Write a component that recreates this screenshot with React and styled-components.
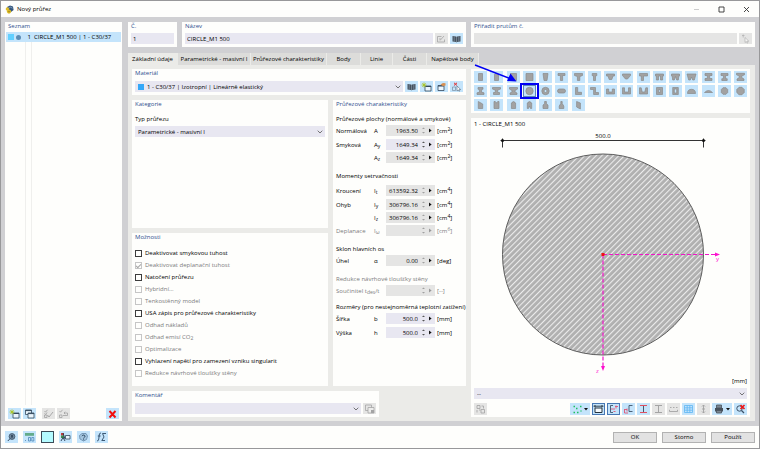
import React from "react";
import styled, { createGlobalStyle } from "styled-components";

const c = {
  white: "#fefefc",
  frame: "#d0d0d3",
  body: "#ebebe8",
  tab: "#dcdcda",
  field: "#e8e7f1",
  off: "#e5e5e4",
  blue: "#c4e4fb",
  head: "#2f4f8f",
  text: "#000000",
  dim: "#7c7c7c",
  shape: "#a2a2a2",
  edge: "#8a8a8a",
};

const GlobalStyle = createGlobalStyle`
  * { box-sizing: border-box; }
  body { margin: 0; background: ${c.white}; }
  body, button, input, select {
    font-family: "Open Sans", "Noto Sans", sans-serif;
    font-size: 6px;
    font-weight: 500;
    line-height: 10px;
    color: ${c.text};
  }
  button, input, select { margin: 0; padding: 0; border: 0; border-radius: 0; outline: 0; }
  svg { display: block; }
  sub, sup { font-size: 5px; line-height: 1px; }
  sub { vertical-align: -1px; }
  sup { vertical-align: 2px; }
`;

const Window = styled.div`
  min-height: 100vh;
  display: flex;
  flex-direction: column;
  border: 1px solid #98989a;
  background: ${c.white};
  white-space: nowrap;
`;

const TitleBar = styled.header`
  height: 16px;
  display: flex;
  align-items: center;
  gap: 3px;
  padding: 0 8px 0 4px;
`;

const WindowTitle = styled.h1`
  margin: 0;
  flex: 1;
  font-size: 6px;
  font-weight: 500;
`;

const WindowButton = styled.button`
  width: 9px;
  height: 9px;
  margin-left: 13px;
  background: none;
`;

const Main = styled.main`
  flex: 1;
  display: flex;
  gap: 6px;
  padding: 5px 4px;
  background: ${c.frame};
`;

const Panel = styled.section`
  background: ${c.white};
  padding: 0 3px 3px;
  min-width: 0;
`;

const PanelTitle = styled.h2`
  display: block;
  margin: 0;
  font-size: 6px;
  line-height: 9px;
  font-weight: 500;
  color: ${c.head};
`;

const Sidebar = styled(Panel)`
  flex: 0 0 117px;
  display: flex;
  flex-direction: column;
  padding: 0 1px 2px;

  & > ${PanelTitle} { padding-left: 2px; }
`;

const List = styled.ul`
  flex: 1;
  margin: 1px 0 3px;
  padding: 0;
  list-style: none;
  background: linear-gradient(to right, transparent 19px, #efefed 19px 20px, transparent 20px 25px, #efefed 25px 26px, transparent 26px);
`;

const ListItem = styled.li`
  height: 10px;
  display: flex;
  align-items: center;
  gap: 2px;
  padding-left: 2px;
  background: ${c.blue};
`;

const ItemNumber = styled.span`
  width: 9px;
  padding-right: 1px;
  text-align: right;
`;

const Swatch = styled.span`
  width: 6px;
  height: 6px;
  flex: none;
  background: ${(p) => p.$color};
`;

const Dot = styled(Swatch)`
  width: 5px;
  height: 5px;
  border-radius: 50%;
`;

const Tools = styled.div`
  display: flex;
  align-items: center;
  gap: 2px;
  padding: 0 2px;
`;

const Spacer = styled.span`
  flex: ${(p) => (p.$w ? `0 0 ${p.$w}px` : 1)};
`;

const ToolButton = styled.button`
  width: ${(p) => (p.$wide ? 20 : 13)}px;
  height: ${(p) => (p.$tall ? 12 : 11)}px;
  flex: none;
  display: flex;
  align-items: center;
  justify-content: center;
  gap: 2px;
  background: ${(p) => p.$fill || (p.disabled ? c.off : c.blue)};
  border: ${(p) => (p.$on ? `1px solid ${p.$fill ? "#3c4c58" : "#4778b4"}` : "0")};

  & > svg { flex: none; }
`;

const Content = styled.div`
  flex: 1;
  min-width: 0;
  display: flex;
  flex-direction: column;
`;

const HeaderRow = styled.div`
  display: grid;
  grid-template-columns: 49px 1fr 1fr;
  gap: 5px;
  margin-bottom: 6px;
`;

const FieldRow = styled.div`
  display: flex;
  gap: 2px;
  margin-top: 2px;
`;

const TextInput = styled.input`
  flex: 1;
  min-width: 0;
  height: 11px;
  padding-left: 2px;
  background: ${(p) => (p.disabled ? c.off : c.field)};
`;

const TabBar = styled.div`
  display: flex;
`;

const Tab = styled.button`
  height: 12px;
  width: ${(p) => p.$w}px;
  text-align: center;
  background: ${(p) => (p["aria-selected"] ? c.body : c.tab)};
  border-right: 1px solid ${c.body};
`;

const TabBody = styled.div`
  flex: 1;
  display: grid;
  grid-template-columns: 334fr 279fr;
  gap: 5px;
  padding: 4px 5px 4px 4px;
  background: ${c.body};
`;

const Column = styled.div`
  display: flex;
  flex-direction: column;
  gap: 5px;
  min-width: 0;
`;

const Split = styled.div`
  flex: 1;
  display: grid;
  grid-template-columns: 196fr 133fr;
  gap: 5px;
`;

const GrowPanel = styled(Panel)`
  flex: 1;
`;

const FieldPanel = styled(Panel)`
  height: 26px;
  width: ${(p) => (p.$partial ? "74%" : "auto")};

  & > ${FieldRow} { margin-top: 3px; }
`;

const SelectBox = styled.span`
  flex: 1;
  min-width: 0;
  height: 11px;
  display: flex;
  align-items: center;
  gap: 3px;
  padding: 0 2px 0 3px;
  background: ${c.field};
`;

const NativeSelect = styled.select`
  flex: 1;
  min-width: 0;
  height: 11px;
  appearance: none;
  background: transparent;
`;

const Label = styled.label`
  display: block;
  margin: 5px 0 1px;
`;

const Options = styled.div`
  margin: 5px 0 4px;
`;

const Option = styled.label`
  height: 12px;
  display: flex;
  align-items: center;
  gap: 3px;
  color: ${(p) => (p.$off ? c.dim : c.text)};
`;

const Check = styled.input`
  appearance: none;
  width: 7px;
  height: 7px;
  flex: none;
  display: grid;
  place-items: center;
  border: 1px solid #3c3c3c;

  &:disabled { border-color: #c6c6c6; }
  &:checked::after {
    content: "";
    width: 4px;
    height: 2px;
    border: solid #a6a6a6;
    border-width: 0 0 1px 1px;
    transform: rotate(-45deg);
  }
`;

const Group = styled.div`
  margin-top: ${(p) => p.$gap}px;
  color: ${(p) => (p.$off ? c.dim : c.text)};
`;

const GroupTitle = styled.h3`
  margin: 0 0 ${(p) => p.$gap || 1}px;
  font-size: 6px;
  line-height: 10px;
  font-weight: 500;
`;

const ValueRow = styled.div`
  display: grid;
  grid-template-columns: ${(p) => (p.$long ? "50px" : "38px 12px")} 49px 1fr;
  align-items: center;
  height: 11px;
  margin-bottom: ${(p) => p.$gap ?? 2}px;
  color: ${(p) => (p.$off ? c.dim : c.text)};
`;

const NumberField = styled.span`
  height: 11px;
  display: flex;
  align-items: center;
  background: ${(p) => (p.$off ? c.off : c.field)};
`;

const NumberInput = styled.input`
  width: 33px;
  height: 11px;
  padding-right: 1px;
  text-align: right;
  background: transparent;
`;

const StepButton = styled.button`
  width: 6px;
  height: 11px;
  margin-left: 1px;
  background: none;
  display: grid;
  place-items: center;
`;

const Unit = styled.span`
  padding-left: 2px;
`;

const ShapePanel = styled(Panel)`
  height: 44px;
  padding: 2px 3px;
`;

const ShapeGrid = styled.div`
  display: grid;
  grid-template-columns: repeat(17, 13px);
  justify-content: space-between;
  row-gap: 2px;
`;

const ShapeButton = styled.button`
  position: relative;
  width: 13px;
  height: 12px;
  background: ${c.blue};
  border: ${(p) => (p.$on ? "1px solid #5b87b8" : "0")};
  display: grid;
  place-items: center;
`;

const Highlight = styled.span`
  position: absolute;
  inset: -3px -4px;
  border: 2px solid #0000f4;
  z-index: 1;
`;

const Pointer = styled.svg`
  position: absolute;
  right: 17px;
  bottom: 12px;
  z-index: 2;
`;

const Preview = styled(Panel)`
  flex: 1;
  display: flex;
  flex-direction: column;
  padding-bottom: 2px;

  & > ${FieldRow} { flex: none; margin: 2px 0 4px; }
  & > ${Tools} { padding: 0; }
`;

const PreviewTitle = styled.h2`
  margin: 0;
  font-size: 6px;
  line-height: 12px;
  font-weight: 500;
`;

const Drawing = styled.svg`
  flex: 1;
  width: 100%;
  min-height: 246px;
`;

const PreviewUnit = styled.div`
  text-align: right;
`;

const Footer = styled.footer`
  height: 22px;
  display: flex;
  align-items: center;
  gap: 5px;
  padding: 0 4px;
`;

const DialogButton = styled.button`
  width: 44px;
  height: 11px;
  background: #e2e2e2;
  border: 1px solid #b2b2b2;
  line-height: 9px;
`;

/* ---------- icons ---------- */

const Svg = ({ w = 11, h = 10, children }) => (
  <svg width={w} height={h} viewBox={`0 0 ${w} ${h}`} fill="none" aria-hidden="true">
    {children}
  </svg>
);

const Chevron = () => (
  <Svg w={6} h={4}>
    <path d="M.7 .7 3 3 5.300 .7" stroke="#555" strokeWidth=".8" />
  </Svg>
);
const Caret = () => (
  <Svg w={4} h={3}>
    <path d="M0 0h4L2 2.500z" fill="#111" />
  </Svg>
);
const AppIcon = () => (
  <Svg w={9} h={9}>
    <path d="M2 2 5 .4 8 1.600 8.600 5 6 7 3 5z" fill="#34557c" />
    <path d="M3 3.500 5.500 2.200 7.500 3.200" stroke="#8fb0cf" strokeWidth=".8" />
    <circle cx="2.400" cy="4" r="1.700" fill="#e0bd28" />
    <circle cx="4" cy="6.600" r="2.100" fill="#d9b821" />
    <circle cx="4" cy="6.600" r=".7" fill="#8a751d" />
  </Svg>
);
const Edit = () => (
  <Svg>
    <path d="M1.500 2.500h4M1.500 2.500v5.500h7V5.500M4 6.500l4-4.500M3 5h2" stroke="#a4a4a4" strokeWidth=".8" />
  </Svg>
);
const Books = () => (
  <Svg>
    <path d="M1.500 2 5 2.500 5.500 3 6 2.500 9.500 2v5.500L6 8l-.5.400L5 8l-3.500-.5z" fill="#47525e" />
    <path d="M5.500 3v5M3.200 2.500v5M7.800 2.500v5" stroke="#9fb6ca" strokeWidth=".5" />
  </Svg>
);
const Pick = () => (
  <Svg>
    <path d="M2 1.500h2.500M3.200.5v3" stroke="#b4b4b4" strokeWidth=".8" />
    <path d="M5 3.500v5l1.300-1 .8 1.700.8-.4-.8-1.600h1.700z" fill="#f6f6f6" stroke="#aaa" strokeWidth=".6" />
  </Svg>
);
const NewWin = () => (
  <Svg>
    <path d="M4 4h6v5H4z" fill="#eaf5fd" stroke="#33495e" strokeWidth=".8" />
    <path d="M4 4.500h6" stroke="#33495e" />
    <path d="M3 .5v5M.5 3h5M1.300 1.300l3.400 3.400M4.700 1.300 1.300 4.700" stroke="#a9c51b" strokeWidth=".8" />
  </Svg>
);
const CopyWin = () => (
  <Svg>
    <path d="M1.500 1h6v4.500h-6z" fill="#eaf5fd" stroke="#33495e" strokeWidth=".8" />
    <path d="M4 4h6v5H4z" fill="#eaf5fd" stroke="#33495e" strokeWidth=".8" />
    <path d="M1.500 1.600h6M4 4.600h6" stroke="#33495e" />
  </Svg>
);
const CopyComment = () => (
  <Svg>
    <path d="M1.500 1h6v5.500h-6z" stroke="#a4a4a4" strokeWidth=".8" />
    <path d="M4 3.500h6V9H4z" fill="#ededec" stroke="#a4a4a4" strokeWidth=".8" />
    <path d="M7 6h3v3H7z" fill="#a4a4a4" />
  </Svg>
);
const EditWin = () => (
  <Svg>
    <path d="M2 3.500h6v5H2z" fill="#eaf5fd" stroke="#33495e" strokeWidth=".8" />
    <path d="M2 4h6" stroke="#33495e" />
    <path d="M4.500 2.500 7 1 9.500 1.200V3.500L7 4.200z" fill="#d58f52" />
  </Svg>
);
const Unpick = () => (
  <Svg>
    <path d="M3 .8 6 3.500M6 .8 3 3.500" stroke="#e12a2a" />
    <path d="M1.500 5h3v3.500h-3z" stroke="#7a8ea2" strokeWidth=".7" />
    <path d="M6 4v5l1.200-1 .8 1.300.8-.4-.7-1.400h1.600z" fill="#fff" stroke="#566a7e" strokeWidth=".6" />
  </Svg>
);
const CheckList = ({ second }) => (
  <Svg>
    <path d="M1.500 2 2.500 3.200 4.500.8M1.500 6h2.500v2.500H1.500z" stroke="#a2a2a2" strokeWidth=".8" />
    {second ? (
      <path d="M5 6.500h4.500V4H6M7.200 2.700 6 4l1.200 1.200" stroke="#a2a2a2" strokeWidth=".8" />
    ) : (
      <path d="m4.500 6 1.500 2 4-5M1.500 4.500 2.500 5.500 4 3.500" stroke="#a2a2a2" strokeWidth=".9" />
    )}
  </Svg>
);
const RedX = () => (
  <Svg>
    <path d="m2.500 2 6 6.500m0-6.500-6 6.500" stroke="#f10d0d" strokeWidth="1.900" />
  </Svg>
);
const Magnify = () => (
  <Svg>
    <circle cx="6" cy="4.500" r="2.900" fill="#6f879e" stroke="#4a6278" />
    <path d="M4 6.700 1.800 9M5 4h2M6 3v3" stroke="#22384d" strokeWidth=".9" />
  </Svg>
);
const Decimals = () => (
  <Svg>
    <path d="M1 1h9v2.800H1z" fill="#63ab8b" />
    <path d="M1.500 8v1M4.500 5.500h2V9h-2zM7.800 5.500h2V9h-2z" stroke="#4e86b8" strokeWidth=".8" />
  </Svg>
);
const Palette = () => (
  <Svg>
    <path d="M1 1h3v2.500H1z" fill="#c23b3b" />
    <path d="M1 3.500h3V6H1z" fill="#3d8f4f" />
    <path d="M1 9 3 5.500 5 9M3 1l2 6" stroke="#243a52" strokeWidth=".9" />
    <path d="M5.500 3.500H10V7H5.500z" fill="#eaf5fd" stroke="#33495e" strokeWidth=".8" />
  </Svg>
);
const HelpGlobe = () => (
  <Svg>
    <path d="M2 7 1.500 3.500 4 1.500 8 1.500 9.500 4 8.500 7.500 5.500 9z" fill="#a5c6e0" stroke="#6488a8" strokeWidth=".8" />
    <path d="M4 4.200C4.200 2.700 7 2.700 7 4.300 7 5.400 5.600 5.200 5.600 6.500M5.600 7.400v.8" stroke="#28445e" />
  </Svg>
);
const Formula = () => (
  <Svg>
    <path d="M5 1.200C3.500.6 3.300 2 3 5s-.6 4.300-2 3.800M1.800 4h2.800M10 1.500H6.500L8 5 5.800 8.500H9" stroke="#2c4966" strokeWidth=".9" />
  </Svg>
);
const Steps = ({ off }) => (
  <Svg w={3} h={7}>
    <path d="M0 2 1.500 .5 3 2zM0 5 1.500 6.500 3 5z" fill={off ? "#a0a0a0" : "#555"} />
  </Svg>
);
const Arrow = ({ off }) => (
  <Svg w={3} h={5}>
    <path d="M0 .5v4L2.600 2.500z" fill={off ? "#999" : "#111"} />
  </Svg>
);
const Swap = () => (
  <Svg>
    <path d="M2 1.500h3v3H2zM2 6v2.500M4 6h1.500M6.500 2h2v2.500M6 5.500h3.500V9H6z" stroke="#a2a2a2" strokeWidth=".8" />
  </Svg>
);
const Points = () => (
  <Svg w={9} h={9}>
    <path d="M.5 1.500h1.500M7 1.500h1.500M3 3.500h1.500M.5 7.500h1.500M4 7.500h1.500M7.500 6h1" stroke="#1ec060" strokeWidth="1.300" />
  </Svg>
);
const Dimension = () => (
  <Svg>
    <path d="M2 4h7v4.500H2z" fill="#f4fafe" stroke="#27323c" />
    <path d="M.5 2.200h10M2 1v2.500M9 1v2.500" stroke="#27323c" strokeWidth=".9" />
  </Svg>
);
const Axes = () => (
  <Svg>
    <path d="M5 1.500H2.500v7H5" stroke="#40536a" strokeWidth=".9" />
    <path d="M3 5h4M8 1.500v3M7 2.500h3M5.500 7.500h2" stroke="#e05575" strokeWidth=".9" />
  </Svg>
);
const AxesLow = () => (
  <Svg>
    <path d="M9.500 1.500H6v6h3.500" stroke="#40536a" strokeWidth=".9" />
    <path d="M1.500 5v4M1.500 9H5M4 4.500v3M1.500 5.500H4" stroke="#e05575" strokeWidth=".9" />
  </Svg>
);
const BeamIcon = ({ a, b }) => (
  <Svg>
    <path d="M2 1.500h7M2 8.500h7" stroke={b} />
    <path d="M5.500 2v6" stroke={a} />
  </Svg>
);
const RulerIcon = () => (
  <Svg>
    <path d="M1.500 7.500h8M1.500 5.800v1.700M9.500 5.800v1.700M2 3.500h1.500M5 3.500h1.500M8 3.500h1.500" stroke="#a4a4a4" strokeWidth=".9" />
  </Svg>
);
const GridIcon = () => (
  <Svg>
    <path d="M1.500 1.500h8v7h-8zM1.500 3.800h8M1.500 6.200h8M4.200 1.500v7M6.800 1.500v7" stroke="#5eb6f4" strokeWidth=".8" />
  </Svg>
);
const Tall = () => (
  <Svg>
    <path d="M5.500 1v8M4 2.500 5.500 1 7 2.500M4 7.500 5.500 9 7 7.500M4 5h3" stroke="#a2a2a2" strokeWidth=".9" />
  </Svg>
);
const Print = () => (
  <Svg w={10}>
    <path d="M1 4h8v3.500H1z" fill="#48525c" />
    <path d="M2.500 1h5v3h-5zM2.500 6.500h5V9h-5z" fill="#7c8893" stroke="#48525c" strokeWidth=".8" />
  </Svg>
);
const ZoomOff = () => (
  <Svg>
    <circle cx="4.500" cy="4.500" r="2.700" stroke="#3c5268" />
    <path d="m6.500 6.500 2.500 2.500" stroke="#3c5268" strokeWidth="1.300" />
    <path d="m5.500 1 4 4m0-4-4 4" stroke="#f01414" strokeWidth="1.600" />
  </Svg>
);

/* Section outlines on an 11 x 10 grid. */
const SHAPES = [
  ["Obdélník", "M3.500 1.500h4v7h-4z"],
  ["Obdélník zaoblený", "M4.300 1.500h2.400l.8.800v6.200h-4V2.300z"],
  ["Obdélník šikmý", "M2.500 1.500h6v7h-6z"],
  ["Čtverec", "M2 1.500h7v7H2z"],
  ["Lichoběžník", "M3 1.500h5L7 8.500H4z"],
  ["T průřez", "M2 1.500h7v2H6.600v5H4.400v-5H2z"],
  ["T průřez s náběhem", "M1.500 1.500h8v2L6.800 4.500v4H4.400v-4L1.500 3.500z"],
  ["T průřez úzký", "M3.200 1.500h4.600v2.200H6.500v4.800h-2V3.700H3.200z"],
  ["T průřez klín", "M1.500 2h8v2H8L6.800 7.500H4.200L3 4H1.500z"],
  ["T průřez klín zkosený", "M1.500 2h8v1.500L6.500 7h-2l-3-3.500z"],
  ["Jednostranné T", "M1.500 1.500h8v2.500H5.500v4.500H3.300V4H1.500z"],
  ["Dvojité T", "M1.500 2h8v2H8.600v4H6.500V4h-2v4H2.400V4h-.9z"],
  ["Dvojité T zkosené", "M1.500 2h8v2h-.7L8.300 8h-1.600L5.500 4.500 4.300 8H2.700L2.200 4h-.7z"],
  ["Dvojité T klín", "M1 2h9L8.300 8h-1.600L5.500 5 4.300 8H2.700z"],
  ["I průřez", "M2 1.500h7v2H6.700v3H9v2H2v-2h2.300v-3H2z"],
  ["I průřez nesymetrický", "M2 1.500h7v2H6.600v3.200h1.600v1.800H2.800V6.700h1.600V3.500H2z"],
  ["I průřez s náběhem", "M1.500 1.300h8v1.500L6.700 4v1.500l2.300 1.500v1.500H2V7l2.300-1.500V4L1.500 2.800z"],
  ["I průřez široký", "M3 1.500h5v1.800H6.600v3L9 6.800v1.700H2V6.800l2.400-.5v-3H3z"],
  ["I průřez horní", "M1.500 1.500h8v1.600L6.700 4v2.500H8.500v2h-6v-2h1.800V4L1.500 3.100z"],
  ["I průřez zkosený", "M1.500 1.500h8v1.600L7 4.500v1.500l2 1v1.500H2V7l2-1V4.500L1.500 3.100z"],
  ["Kruh", "M5.500 1.300a3.700 3.700 0 1 1 0 7.400a3.700 3.700 0 1 1 0-7.400z"],
  ["Trubka", "M5.500 1.300a3.700 3.700 0 1 1 0 7.400a3.700 3.700 0 1 1 0-7.400zM5.500 3.500a1.500 1.500 0 1 0 0 3a1.500 1.500 0 1 0 0-3z"],
  ["Ovál", "M3.500 3h4a2 2 0 0 1 0 4h-4a2 2 0 0 1 0-4z"],
  ["L průřez", "M2.500 1.500h2.200v4.800H8.500v2.200h-6z"],
  ["Z průřez", "M1.500 1.500h5v5H9.500v2H4.600v-5H1.500z"],
  ["U průřez", "M1.500 3h2.200v3h3.600V3h2.200v5h-8z"],
  ["U průřez vysoký", "M1.500 1.800h2v4.200h4V1.800h2V8h-8z"],
  ["U průřez zkosený", "M1.500 1.800h1.700L4.200 6h2.600l1-4.200h1.700V8h-8z"],
  ["Komora", "M2.500 1.500h6v7h-6zM4.700 3.500v3h1.600v-3z"],
  ["Komora tenká", "M2.700 1.500h5.600v7H2.700zM4.300 3v4h2.400V3z"],
  ["Půlkruh", "M1.500 7.500a4 4.200 0 0 1 8 0z"],
  ["Úseč", "M1.500 6.500q4-4 8 0z"],
  ["Osmiúhelník", "M4 1.700h3L8.700 3.500v3L7 8.300H4L2.300 6.500v-3z"],
  ["Mnohoúhelník", "M4 1.300h3L9.200 3.500v3L7 8.700H4L1.800 6.500v-3z"],
  ["Zkosený obdélník", "M3.300 1.500 7.700 4v4.500H3.300z"],
  ["Obdélník s výřezem", "M3 1.500h1.300l.5 1.200h1.400l.5-1.200H8v7H3z"],
  ["Oblouk", "M3.400 8.500V3q2.100-2.800 4.200 0v5.500z"],
  ["Oblouk s výřezem", "M3.300 8.500V3q2.200-2.800 4.400 0v5.500H6.500L5.500 6l-1 2.500z"],
  ["Láhev", "M4.600 1.500h1.800v2.200L8 5v3.500H3V5l1.600-1.300z"],
  ["Láhev úzká", "M4.800 1.500h1.400v2L7.800 6v2.500H3.200V6l1.600-2.500z"],
  ["Rovnoběžník", "M3.600 1.500 7.400 3v6L5 7.800 3.600 7z"],
];

/* ---------- building blocks ---------- */

const Select = ({ label, swatch, children }) => (
  <SelectBox>
    {swatch && <Swatch $color={swatch} />}
    <NativeSelect aria-label={label}>
      <option>{children}</option>
    </NativeSelect>
    <Chevron />
  </SelectBox>
);

const Tool = ({ label, children, ...rest }) => (
  <ToolButton type="button" aria-label={label} {...rest}>
    {children}
  </ToolButton>
);

const Value = ({ id, label, symbol, value, unit, off, editable, long, gap }) => (
  <ValueRow $off={off} $long={long} $gap={gap}>
    <label htmlFor={id}>{label}</label>
    {!long && <span>{symbol}</span>}
    <NumberField $off={!editable}>
      <NumberInput id={id} aria-label={id} defaultValue={value} disabled={off} readOnly={!editable} />
      <StepButton type="button" aria-label="Krok">
        <Steps off={!editable} />
      </StepButton>
      <StepButton type="button" aria-label="Další">
        <Arrow off={off} />
      </StepButton>
    </NumberField>
    <Unit>{unit}</Unit>
  </ValueRow>
);

const TABS = [
  ["Základní údaje", 50],
  ["Parametrické - masivní I", 73],
  ["Průřezové charakteristiky", 76],
  ["Body", 34],
  ["Linie", 32],
  ["Části", 34],
  ["Napěťové body", 52],
];

const OPTIONS = [
  { label: "Deaktivovat smykovou tuhost" },
  { label: "Deaktivovat deplanační tuhost", off: true, checked: true },
  { label: "Natočení průřezu" },
  { label: "Hybridní...", off: true },
  { label: "Tenkostěnný model", off: true },
  { label: "USA zápis pro průřezové charakteristiky" },
  { label: "Odhad nákladů", off: true },
  { label: <span>Odhad emisí CO<sub>2</sub></span>, off: true },
  { label: "Optimalizace", off: true },
  { label: "Vyhlazení napětí pro zamezení vzniku singularit" },
  { label: "Redukce návrhové tloušťky stěny", off: true },
];

const cm = (n) => <>[cm<sup>{n}</sup>]</>;
const sym = (a, b) => <>{a}<sub>{b}</sub></>;

const SectionDrawing = () => (
  <Drawing viewBox="0 0 273 246" fill="none" fontSize="6">
    <defs>
      <pattern id="hatch" width="4" height="4" patternUnits="userSpaceOnUse" patternTransform="rotate(45)">
        <rect width="4" height="4" fill="#b0b0b0" />
        <rect width="1.100" height="4" fill="#ececec" />
      </pattern>
    </defs>
    <path d="M26.500 10.500h205M28.500 8.500v9M229.500 8.500v9" stroke="#333" />
    <circle cx="28.500" cy="10.500" r="1.500" fill="#111" />
    <circle cx="229.500" cy="10.500" r="1.500" fill="#111" />
    <text x="129" y="8" textAnchor="middle" fill={c.text}>500.0</text>
    <circle cx="129" cy="124.500" r="100.500" fill="url(#hatch)" stroke="#5c5c5c" />
    <path d="M129 124.500H242" stroke="#f014c8" strokeWidth="1.200" strokeDasharray="4 2" />
    <path d="M129 124.500V237" stroke="#f014c8" strokeWidth="1.200" strokeDasharray="4 2" />
    <path d="M241 122.500v4l5-2zM127 236h4l-2 5z" fill="#ff10d0" />
    <rect x="127.500" y="123" width="3" height="3" fill="#f01010" />
    <text x="242" y="131" fill="#ff10d0">y</text>
    <text x="122" y="243" fill="#ff10d0">z</text>
  </Drawing>
);

export default function App() {
  return (
    <>
      <GlobalStyle />
      <Window>
        <TitleBar>
          <AppIcon />
          <WindowTitle>Nový průřez</WindowTitle>
          <WindowButton type="button" aria-label="Minimalizovat">
            <Svg w={9} h={9}><path d="M2 4.500h5" stroke="#ccc" /></Svg>
          </WindowButton>
          <WindowButton type="button" aria-label="Maximalizovat">
            <Svg w={9} h={9}><path d="M2 2h5v5H2z" stroke="#333" strokeWidth=".9" /></Svg>
          </WindowButton>
          <WindowButton type="button" aria-label="Zavřít">
            <Svg w={9} h={9}><path d="m2 2 5 5m0-5-5 5" stroke="#333" strokeWidth=".9" /></Svg>
          </WindowButton>
        </TitleBar>

        <Main>
          <Sidebar>
            <PanelTitle>Seznam</PanelTitle>
            <List>
              <ListItem>
                <Swatch $color="#62d0ff" />
                <Dot $color="#5c8cb4" />
                <ItemNumber>1</ItemNumber>
                <span>CIRCLE_M1 500 | 1 - C30/37</span>
              </ListItem>
            </List>
            <Tools>
              <Tool label="Nový"><NewWin /></Tool>
              <Tool label="Kopírovat"><CopyWin /></Tool>
              <Spacer $w={2} />
              <Tool label="Vybrat vše" disabled><CheckList /></Tool>
              <Tool label="Obrátit výběr" disabled><CheckList second /></Tool>
              <Spacer />
              <Tool label="Smazat"><RedX /></Tool>
            </Tools>
          </Sidebar>

          <Content>
            <HeaderRow>
              <Panel>
                <PanelTitle as="label" htmlFor="number">Č.</PanelTitle>
                <FieldRow><TextInput id="number" defaultValue="1" /></FieldRow>
              </Panel>
              <Panel>
                <PanelTitle as="label" htmlFor="name">Název</PanelTitle>
                <FieldRow>
                  <TextInput id="name" defaultValue="CIRCLE_M1 500" />
                  <Tool label="Upravit název" disabled><Edit /></Tool>
                  <Tool label="Knihovna průřezů"><Books /></Tool>
                </FieldRow>
              </Panel>
              <Panel>
                <PanelTitle as="label" htmlFor="members">Přiřadit prutům č.</PanelTitle>
                <FieldRow>
                  <TextInput id="members" disabled />
                  <Tool label="Vybrat pruty" disabled><Pick /></Tool>
                </FieldRow>
              </Panel>
            </HeaderRow>

            <TabBar role="tablist">
              {TABS.map(([name, w], i) => (
                <Tab key={name} type="button" role="tab" aria-selected={i === 0} $w={w}>{name}</Tab>
              ))}
            </TabBar>

            <TabBody>
              <Column>
                <FieldPanel>
                  <PanelTitle>Materiál</PanelTitle>
                  <FieldRow>
                    <Select label="Materiál" swatch="#35a8f8">1 - C30/37 | Izotropní | Lineárně elastický</Select>
                    <Tool label="Knihovna materiálů"><Books /></Tool>
                    <Tool label="Nový materiál"><NewWin /></Tool>
                    <Tool label="Upravit materiál"><EditWin /></Tool>
                    <Tool label="Odebrat materiál"><Unpick /></Tool>
                  </FieldRow>
                </FieldPanel>

                <Split>
                  <Column>
                    <GrowPanel>
                      <PanelTitle>Kategorie</PanelTitle>
                      <Label>Typ průřezu</Label>
                      <FieldRow>
                        <Select label="Typ průřezu">Parametrické - masivní I</Select>
                      </FieldRow>
                    </GrowPanel>
                    <Panel>
                      <PanelTitle>Možnosti</PanelTitle>
                      <Options>
                        {OPTIONS.map((o, i) => (
                          <Option key={i} $off={o.off}>
                            <Check type="checkbox" disabled={o.off} defaultChecked={o.checked} />
                            {o.label}
                          </Option>
                        ))}
                      </Options>
                    </Panel>
                  </Column>

                  <Panel>
                    <PanelTitle>Průřezové charakteristiky</PanelTitle>
                    <Group $gap={5}>
                      <GroupTitle>Průřezové plochy (normálové a smykové)</GroupTitle>
                      <Value id="A" label="Normálová" symbol="A" value="1963.50" unit={cm(2)} gap={3} />
                      <Value id="Ay" label="Smyková" symbol={sym("A", "y")} value="1649.34" unit={cm(2)} editable />
                      <Value id="Az" symbol={sym("A", "z")} value="1649.34" unit={cm(2)} />
                    </Group>
                    <Group $gap={8}>
                      <GroupTitle $gap={4}>Momenty setrvačnosti</GroupTitle>
                      <Value id="It" label="Kroucení" symbol={sym("I", "t")} value="613592.32" unit={cm(4)} gap={3} />
                      <Value id="Iy" label="Ohyb" symbol={sym("I", "y")} value="306796.16" unit={cm(4)} />
                      <Value id="Iz" symbol={sym("I", "z")} value="306796.16" unit={cm(4)} />
                      <Value id="Iw" label="Deplanace" symbol={sym("I", "ω")} value="" unit={cm(6)} off />
                    </Group>
                    <Group $gap={8}>
                      <GroupTitle>Sklon hlavních os</GroupTitle>
                      <Value id="alpha" label="Úhel" symbol="α" value="0.00" unit="[deg]" />
                    </Group>
                    <Group $gap={8} $off>
                      <GroupTitle>Redukce návrhové tloušťky stěny</GroupTitle>
                      <Value id="factor" label={<>Součinitel t<sub>des</sub>/t</>} value="" unit="[--]" off long />
                    </Group>
                    <Group $gap={6}>
                      <GroupTitle>Rozměry (pro nestejnoměrná teplotní zatížení)</GroupTitle>
                      <Value id="b" label="Šířka" symbol="b" value="500.0" unit="[mm]" editable gap={3} />
                      <Value id="h" label="Výška" symbol="h" value="500.0" unit="[mm]" editable />
                    </Group>
                  </Panel>
                </Split>

                <FieldPanel $partial>
                  <PanelTitle>Komentář</PanelTitle>
                  <FieldRow>
                    <Select label="Komentář" />
                    <Tool label="Převzít komentář" disabled><CopyComment /></Tool>
                  </FieldRow>
                </FieldPanel>
              </Column>

              <Column>
                <ShapePanel>
                  <ShapeGrid>
                    {SHAPES.map(([name, d]) => {
                      const on = name === "Kruh";
                      return (
                        <ShapeButton key={name} type="button" aria-label={name} aria-pressed={on} $on={on}>
                          <Svg>
                            <path d={d} fill={c.shape} stroke={c.edge} strokeWidth=".7" fillRule="evenodd" />
                          </Svg>
                          {on && (
                            <>
                              <Highlight />
                              <Pointer width="44" height="20" viewBox="0 0 44 20" aria-hidden="true">
                                <path d="M1 1 36 14.500" stroke="#0000f4" strokeWidth="1.400" />
                                <path d="m36.500 9.500-3.500 7.500 9.500.5z" fill="#0000f4" />
                              </Pointer>
                            </>
                          )}
                        </ShapeButton>
                      );
                    })}
                  </ShapeGrid>
                </ShapePanel>

                <Preview>
                  <PreviewTitle>1 - CIRCLE_M1 500</PreviewTitle>
                  <SectionDrawing />
                  <PreviewUnit>[mm]</PreviewUnit>
                  <FieldRow><Select label="Zobrazení">--</Select></FieldRow>
                  <Tools>
                    <Tool label="Prohodit" disabled $tall><Swap /></Tool>
                    <Spacer />
                    <Tool label="Body" $wide $tall><Points /><Caret /></Tool>
                    <Tool label="Kóty" $on $tall><Dimension /></Tool>
                    <Tool label="Hlavní osy" $on $tall><Axes /></Tool>
                    <Tool label="Osy" $tall><AxesLow /></Tool>
                    <Tool label="Napětí" $tall><BeamIcon a="#47596c" b="#e05060" /></Tool>
                    <Tool label="Obrys" disabled $tall><BeamIcon a="#a4a4a4" b="#a4a4a4" /></Tool>
                    <Tool label="Pravítko" disabled $tall><RulerIcon /></Tool>
                    <Tool label="Mřížka" $tall><GridIcon /></Tool>
                    <Tool label="Výška" disabled $tall><Tall /></Tool>
                    <Tool label="Tisk" $wide $tall><Print /><Caret /></Tool>
                    <Tool label="Zrušit zvětšení" $tall><ZoomOff /></Tool>
                  </Tools>
                </Preview>
              </Column>
            </TabBody>
          </Content>
        </Main>

        <Footer>
          <Tool label="Hledat" $tall><Magnify /></Tool>
          <Tool label="Desetinná místa" $tall><Decimals /></Tool>
          <Tool label="Barva" $tall $on $fill="#b4fbff" />
          <Tool label="Zobrazení" $tall><Palette /></Tool>
          <Tool label="Nápověda" $tall><HelpGlobe /></Tool>
          <Tool label="Vzorec" $tall><Formula /></Tool>
          <Spacer />
          <DialogButton type="button">OK</DialogButton>
          <DialogButton type="button">Storno</DialogButton>
          <DialogButton type="button">Použít</DialogButton>
        </Footer>
      </Window>
    </>
  );
}
